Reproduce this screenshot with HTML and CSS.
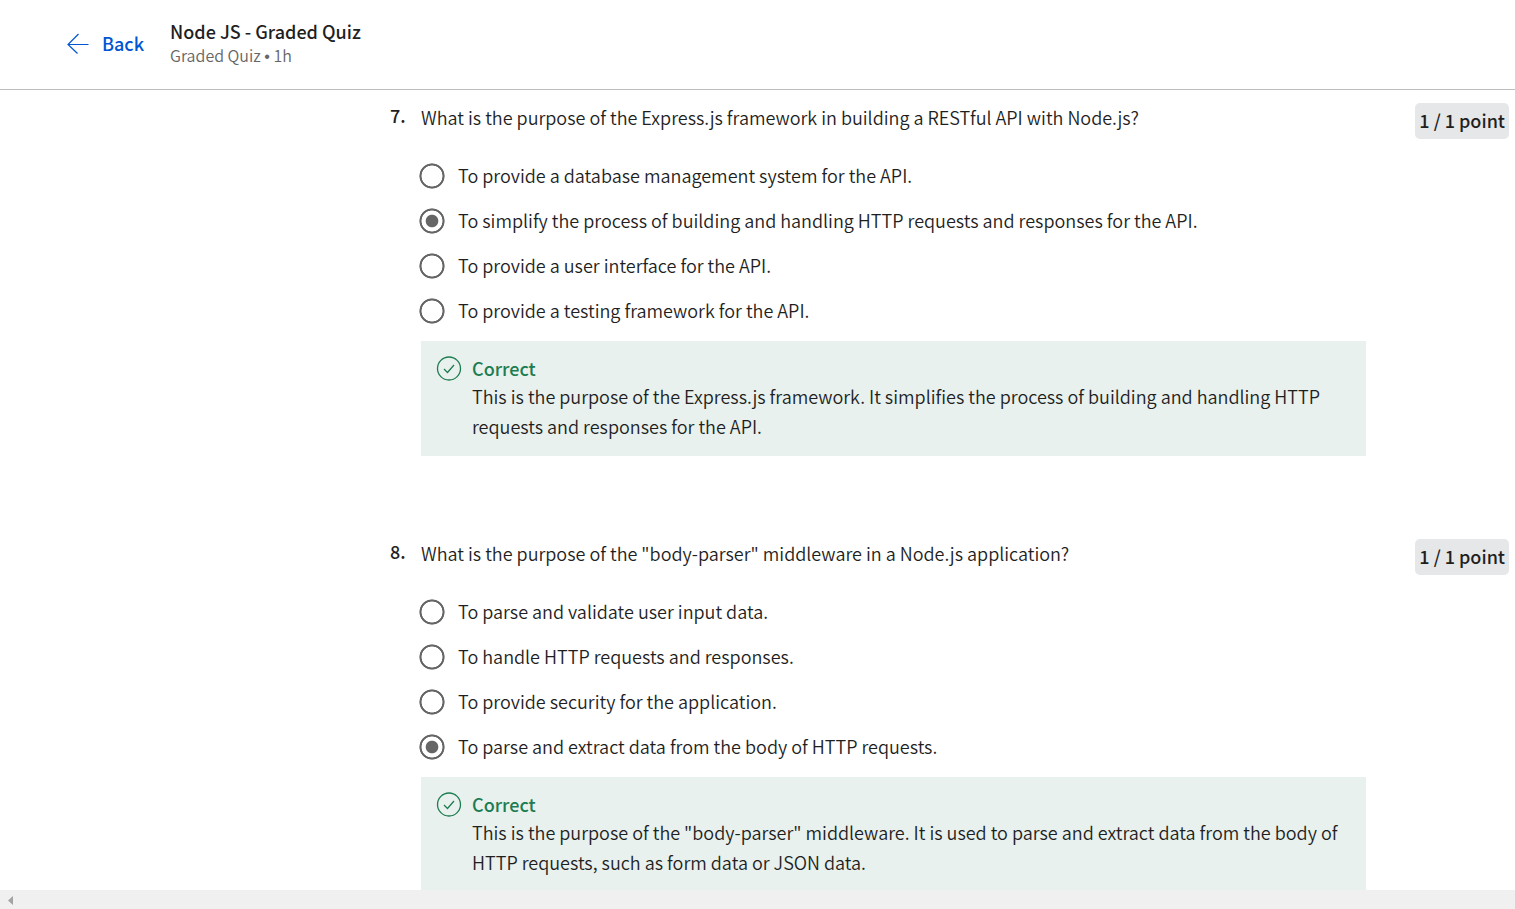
FILE: index.html
```html
<!DOCTYPE html>
<html lang="en">
<head>
<meta charset="utf-8">
<title>Node JS - Graded Quiz</title>
<link rel="stylesheet" href="styles.css">
</head>
<body>
<header class="topbar">
  <a class="back" href="#">
    <svg class="back-icon" viewBox="0 0 22 22" aria-hidden="true"><path d="M11.500 2 1 12.500l9.500 9M1 12.500h20.500"/></svg>
    <span>Back</span>
  </a>
  <div class="heading">
    <h1 class="title">Node JS - Graded Quiz</h1>
    <p class="subtitle">Graded Quiz <span class="bullet">•</span> 1h</p>
  </div>
</header>
<main class="quiz">
  <section class="question">
    <span class="number">7.</span>
    <div class="content">
      <p class="prompt" id="q7">What is the purpose of the Express.js framework in building a RESTful API with Node.js?</p>
      <div class="options" role="radiogroup" aria-labelledby="q7">
        <label class="option"><input class="radio" type="radio" name="q7"><span class="option-text">To provide a database management system for the API.</span></label>
        <label class="option"><input class="radio" type="radio" name="q7" checked><span class="option-text">To simplify the process of building and handling HTTP requests and responses for the API.</span></label>
        <label class="option"><input class="radio" type="radio" name="q7"><span class="option-text">To provide a user interface for the API.</span></label>
        <label class="option"><input class="radio" type="radio" name="q7"><span class="option-text">To provide a testing framework for the API.</span></label>
      </div>
      <div class="feedback">
        <svg class="check" viewBox="0 0 26 26" aria-hidden="true"><circle cx="13" cy="13.500" r="11.500"/><path d="m8 14 3.500 3.500 6.500-7.500"/></svg>
        <div>
          <h2 class="verdict">Correct</h2>
          <p class="explanation">This is the purpose of the Express.js framework. It simplifies the process of building and handling HTTP requests and responses for the API.</p>
        </div>
      </div>
    </div>
    <span class="points">1 / 1 point</span>
  </section>
  <section class="question">
    <span class="number">8.</span>
    <div class="content">
      <p class="prompt" id="q8">What is the purpose of the "body-parser" middleware in a Node.js application?</p>
      <div class="options" role="radiogroup" aria-labelledby="q8">
        <label class="option"><input class="radio" type="radio" name="q8"><span class="option-text">To parse and validate user input data.</span></label>
        <label class="option"><input class="radio" type="radio" name="q8"><span class="option-text">To handle HTTP requests and responses.</span></label>
        <label class="option"><input class="radio" type="radio" name="q8"><span class="option-text">To provide security for the application.</span></label>
        <label class="option"><input class="radio" type="radio" name="q8" checked><span class="option-text">To parse and extract data from the body of HTTP requests.</span></label>
      </div>
      <div class="feedback">
        <svg class="check" viewBox="0 0 26 26" aria-hidden="true"><circle cx="13" cy="13.500" r="11.500"/><path d="m8 14 3.500 3.500 6.500-7.500"/></svg>
        <div>
          <h2 class="verdict">Correct</h2>
          <p class="explanation">This is the purpose of the "body-parser" middleware. It is used to parse and extract data from the body of HTTP requests, such as form data or JSON data.</p>
        </div>
      </div>
    </div>
    <span class="points">1 / 1 point</span>
  </section>
</main>
<div class="scrollbar">
  <svg class="scroll-arrow" viewBox="0 0 5 9" aria-hidden="true"><path d="M5 0v9L0 4.500z"/></svg>
</div>
</body>
</html>
```
FILE: styles.css
```css
* {
  box-sizing: border-box;
}

body {
  display: flex;
  flex-direction: column;
  height: 100vh;
  margin: 0;
  overflow: hidden;
  background: #fff;
  color: #1f1f1f;
  font-family: "Source Sans Pro", "Noto Sans CJK SC", sans-serif;
  font-size: 18px;
  font-weight: 350;
  line-height: 30px;
}

h1, h2, p {
  margin: 0;
}

.topbar {
  display: flex;
  flex: none;
  align-items: center;
  gap: 26px;
  height: 90px;
  padding: 0 0 3px 67px;
  border-bottom: 1px solid #bdbdbd;
}

.back {
  display: flex;
  align-items: center;
  gap: 13px;
  color: #0056d2;
  font-weight: 500;
  text-decoration: none;
}

.back-icon {
  width: 22px;
  height: 22px;
  fill: none;
  stroke: currentColor;
  stroke-width: 1.2;
}

.title {
  font-size: 18px;
  font-weight: 500;
  line-height: 24px;
}

.subtitle {
  color: #666;
  font-size: 16px;
  line-height: 24px;
}

.bullet {
  font-family: "Liberation Sans", sans-serif;
  line-height: 1;
}

.quiz {
  flex: 1;
  min-height: 0;
  padding: 13px 6px 0 390px;
  overflow: hidden;
}

.question {
  display: grid;
  grid-template-columns: 31px 1fr auto;
  align-items: start;
  margin-bottom: 83px;
}

.number {
  font-weight: 500;
  line-height: 24px;
}

.content {
  margin-right: 49px;
}

.prompt {
  line-height: 28px;
}

.options {
  margin: 22px 0 8px;
}

.option {
  display: flex;
  align-items: center;
  gap: 13px;
  min-height: 45px;
}

.option-text {
  padding-bottom: 2px;
}

.radio {
  flex: none;
  width: 26px;
  height: 26px;
  margin: 0 0 0 -2px;
  border-radius: 50%;
  background: radial-gradient(closest-side, transparent 78%, #666 83%, #666 94%, transparent 100%);
  appearance: none;
}

.radio:checked {
  background: radial-gradient(closest-side, #666 45%, transparent 52%, transparent 78%, #666 83%, #666 94%, transparent 100%);
}

.feedback {
  display: flex;
  align-items: flex-start;
  gap: 10px;
  padding: 14px 16px 15px 15px;
  background: #e8f1ee;
}

.check {
  flex: none;
  width: 26px;
  height: 26px;
  fill: none;
  stroke: #1d7c50;
  stroke-width: 1.3;
}

.verdict {
  color: #1d7c50;
  font-size: 18px;
  font-weight: 500;
  line-height: 26px;
}

.points {
  padding: 2px 4px 4px;
  border-radius: 5px;
  background: #e5e7e8;
  font-weight: 500;
}

.scrollbar {
  display: flex;
  flex: none;
  align-items: center;
  height: 19px;
  padding: 1px 0 0 8px;
  background: #f0f0f0;
}

.scroll-arrow {
  width: 5px;
  height: 9px;
  fill: #a3a3a3;
}
```
